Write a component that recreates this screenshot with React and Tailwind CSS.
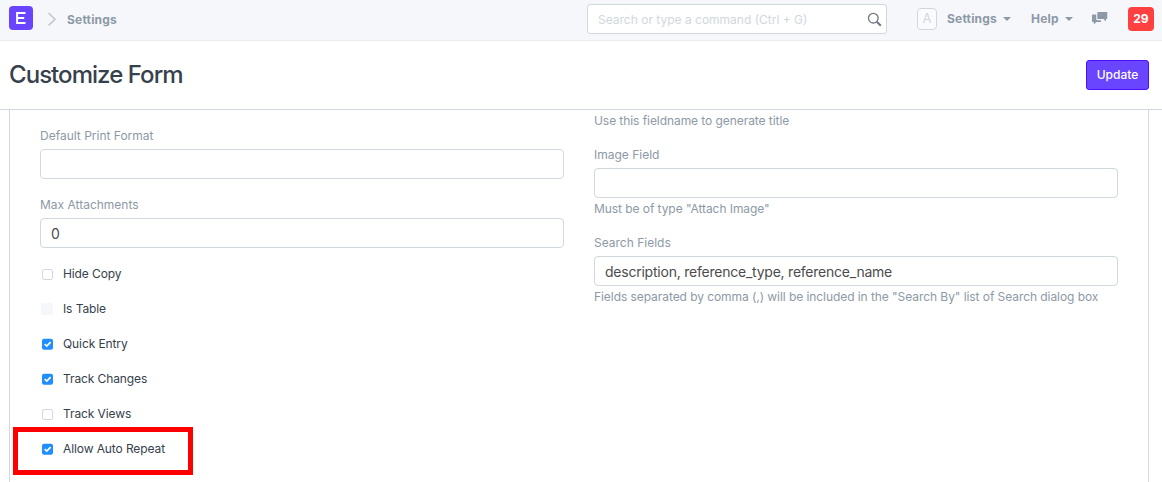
import React from "react";

function Checkbox({ state }) {
  if (state === "checked") {
    return (
      <svg className="size-3 shrink-0" viewBox="0 0 12 12" fill="none">
        <rect x="0" y="0.7" width="11" height="11" rx="2" fill="#1f8fff" />
        <path d="M2.7 6.1 4.8 8.1 8.6 4.2" stroke="#fff" strokeWidth="1.7" />
      </svg>
    );
  }
  if (state === "disabled") {
    return <span className="-ml-px size-3 shrink-0 rounded-[2px] bg-[#f5f7fa]" />;
  }
  return (
    <svg className="size-3 shrink-0" viewBox="0 0 12 12" fill="none">
      <rect x="0.5" y="1.5" width="10" height="10" rx="1.6" fill="#fff" stroke="#d1d8dd" />
    </svg>
  );
}

function CheckRow({ state, label, highlighted }) {
  return (
    <div className="relative grid h-[35px] grid-cols-[12px_auto] items-center gap-[9px] pl-0.5 text-[12px] tracking-[-0.1px] text-[#36414c]">
      <Checkbox state={state} />
      <span className="whitespace-nowrap">{label}</span>
      {highlighted && (
        <div className="absolute -left-[27px] -top-[4px] h-[48px] w-[180px] border-[5px] border-[#ff0000]" />
      )}
    </div>
  );
}

function Field({ label, value, help }) {
  return (
    <div>
      <div className="h-[22px] pt-px text-[12px] leading-4 text-[#8d99a6]">{label}</div>
      <div className="flex h-[30px] items-center rounded-[4px] border border-[#d1d8dd] px-2.5 pt-px text-[14px] tracking-[-0.23px] text-[#4c4c4c]">
        {value}
      </div>
      {help && <Help>{help}</Help>}
    </div>
  );
}

function Help({ children }) {
  return (
    <div className="pt-[3px] text-[12px] leading-4 tracking-[-0.065px] whitespace-nowrap text-[#8d99a6]">
      {children}
    </div>
  );
}

function Caret() {
  return (
    <svg className="h-1 w-2" viewBox="0 0 8 4" fill="currentColor">
      <path d="M0 0h8L4 4z" />
    </svg>
  );
}

const checks = [
  { label: "Hide Copy", state: "empty" },
  { label: "Is Table", state: "disabled" },
  { label: "Quick Entry", state: "checked" },
  { label: "Track Changes", state: "checked" },
  { label: "Track Views", state: "empty" },
  { label: "Allow Auto Repeat", state: "checked", highlighted: true },
];

export default function App() {
  return (
    <div className="flex h-[482px] w-[1162px] flex-col overflow-hidden bg-white font-['Inter',sans-serif]">
      <header className="flex h-[41px] shrink-0 items-start border-b border-[#e9ecee] bg-[#f5f7fa] text-[12px] font-bold text-[#8d99a6]">
        <div className="mt-1.5 ml-[9px] flex size-6 items-center justify-center rounded-[4px] bg-[#6a45ff]">
          <svg className="h-3 w-2.5" viewBox="0 0 10 12" fill="none" stroke="#fff" strokeWidth="2">
            <path d="M9.5 1.1H1.1v9.8h8.4M1 6h7.2" />
          </svg>
        </div>
        <svg className="mt-3 ml-[14px] h-[14px] w-[10px]" viewBox="0 0 10 14" fill="none" stroke="#c0c9d1" strokeWidth="1.6">
          <path d="M1.6 1 8 7.2 1.6 13.4" />
        </svg>
        <div className="mt-3 ml-[10px] w-[520px] leading-4 tracking-[0.2px]">Settings</div>
        <div className="mt-1 flex h-[30px] w-[300px] items-center justify-between rounded-[3px] border border-[#d1d8dd] bg-white pr-1 pl-[10px] pt-px font-normal text-[#d1d8dd]">
          <span>Search or type a command (Ctrl + G)</span>
          <svg className="size-[15px]" viewBox="0 0 15 15" fill="none" stroke="#6c7680">
            <circle cx="6.3" cy="6.2" r="4.8" strokeWidth="1.3" />
            <path d="m9.8 9.7 4 4" strokeWidth="2" />
          </svg>
        </div>
        <div className="mt-2 ml-[30px] flex h-[22px] w-5 items-center justify-center rounded-[4px] border border-[#d1d8dd] bg-[#fafbfc] text-[13px] font-normal text-[#d1d8dd]">
          A
        </div>
        <div className="mt-[11px] ml-[10px] flex w-[84px] items-center gap-1.5 leading-4 tracking-[0.2px]">
          Settings <Caret />
        </div>
        <div className="mt-[11px] flex w-[61px] items-center gap-1.5 leading-4 tracking-[0.2px]">
          Help <Caret />
        </div>
        <svg className="mt-3 h-[14px] w-4" viewBox="0 0 16 14" fill="#8d99a6">
          <path d="M6.2 0H14.4Q15.3 0 15.3.9V6.2Q15.3 7.1 14.4 7.1H14V9.6L11.4 7.1H6.2Q5.3 7.1 5.3 6.2V.9Q5.3 0 6.2 0Z" />
          <path d="M4.2 2.4H.9Q0 2.4 0 3.3V9.2Q0 10.1.9 10.1H1.8V12.6L4.4 10.1H8.1Q9 10.1 9 9.2V8.2H5.3Q4.2 8.2 4.2 7.1Z" />
        </svg>
        <div className="mt-[7px] ml-5 flex h-6 w-[26px] items-center justify-center rounded-[4px] bg-[#ff4040] text-white">
          29
        </div>
      </header>

      <div className="flex h-[69px] shrink-0 items-center justify-between border-b border-[#d1d8dd] pr-[13px] pl-[9px]">
        <h1 className="text-[24px] leading-8 font-medium tracking-[-0.95px] text-[#36414c]">Customize Form</h1>
        <button className="h-[30px] w-[63px] rounded-[3px] border border-[#4d0dff] bg-[#6a45ff] text-[12px] font-medium text-white">
          Update
        </button>
      </div>

      <main className="ml-[9px] flex w-[1140px] grow gap-[30px] border-x border-[#d1d8dd] px-[30px]">
        <section className="w-[524px] pt-[17px]">
          <Field label="Default Print Format" />
          <div className="mt-[17px]">
            <Field label="Max Attachments" value="0" />
          </div>
          <div className="mt-2">
            {checks.map((c) => (
              <CheckRow key={c.label} {...c} />
            ))}
          </div>
        </section>
        <section className="w-[524px]">
          <Help>Use this fieldname to generate title</Help>
          <div className="mt-[17px] flex flex-col gap-[17px]">
            <Field label="Image Field" help={'Must be of type "Attach Image"'} />
            <Field
              label="Search Fields"
              value="description, reference_type, reference_name"
              help={'Fields separated by comma (,) will be included in the "Search By" list of Search dialog box'}
            />
          </div>
        </section>
      </main>
    </div>
  );
}
